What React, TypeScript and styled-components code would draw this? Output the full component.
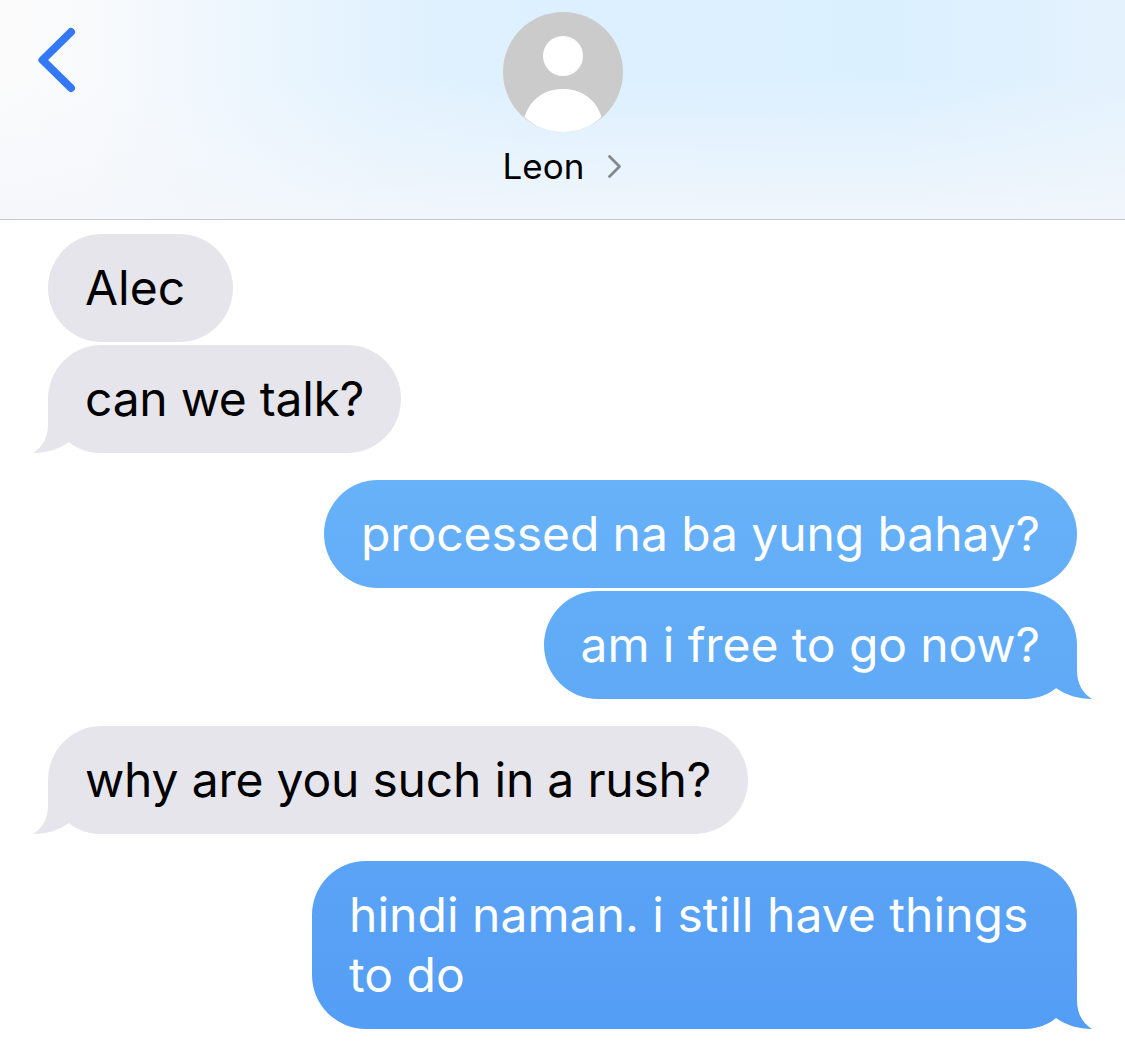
import { createGlobalStyle } from 'styled-components';
import styled from 'styled-components';

const GlobalStyle = createGlobalStyle`
  html, body {
    margin: 0;
    padding: 0;
    background: #fff;
  }
  body {
    font-family: Inter, "Liberation Sans", sans-serif;
  }
`;

function App() {
  return (
    <>
      <GlobalStyle />
      <Page>
        <Header>
          <BackButton>
            <svg width="42" height="68" viewBox="0 0 42 68" fill="none">
              <path d="M35 6 L6.5 34 L35 62" stroke="#3478f6" strokeWidth="8" strokeLinecap="round" strokeLinejoin="round" />
            </svg>
          </BackButton>
          <Contact>
            <Avatar>
              <svg width="120" height="120" viewBox="0 0 120 120">
                <circle cx="60" cy="60" r="60" fill="#cbcbcb" />
                <circle cx="60" cy="44" r="20" fill="#fff" />
                <path d="M21.5 105 C27 87 42 77 60 77 C78 77 93 87 98.5 105 C88 115 75 120 60 120 C45 120 32 115 21.5 105 Z" fill="#fff" />
              </svg>
            </Avatar>
            <NameRow>
              <Name>Leon</Name>
              <svg width="15" height="25" viewBox="0 0 15 25" fill="none">
                <path d="M2.5 2.5 L12.5 12.5 L2.5 22.5" stroke="#85878e" strokeWidth="2.8" strokeLinecap="round" strokeLinejoin="round" />
              </svg>
            </NameRow>
          </Contact>
        </Header>
        <Thread>
          <Group>
            <Bubble>Alec</Bubble>
            <Bubble $tail $tracking={-0.25}>can we talk?</Bubble>
          </Group>
          <Group>
            <Bubble $mine $tracking={-0.08}>processed na ba yung bahay?</Bubble>
            <Bubble $mine $tail $tracking={-0.1}>am i free to go now?</Bubble>
          </Group>
          <Group>
            <Bubble $tail $tracking={-0.2}>why are you such in a rush?</Bubble>
          </Group>
          <Group>
            <Bubble $mine $tail $wide $tracking={0.03}>hindi naman. i still have things to do</Bubble>
          </Group>
        </Thread>
      </Page>
    </>
  );
}

const Page = styled.div`
  width: 1125px;
  height: 1050px;
  overflow: hidden;
  background: #fff;
`;

const Header = styled.header`
  position: relative;
  height: 207px;
  border-bottom: 1px solid #c8c8ca;
  display: flex;
  justify-content: center;
  padding-top: 12px;
  background:
    linear-gradient(180deg, rgba(244, 247, 251, 0) 35%, rgba(244, 247, 251, 0.85) 100%),
    linear-gradient(90deg, #fbfbfb 0%, #f9fafc 8%, #eef7fe 20%, #e2f2fe 34%, #dcf0ff 50%, #dbf0ff 80%, #e4f2fd 100%);
`;

const BackButton = styled.div`
  position: absolute;
  left: 36px;
  top: 26px;
  line-height: 0;
`;

const Contact = styled.div`
  display: flex;
  flex-direction: column;
  align-items: center;
`;

const Avatar = styled.div`
  width: 120px;
  height: 120px;
  line-height: 0;
`;

const NameRow = styled.div`
  display: flex;
  align-items: center;
  gap: 23px;
  margin-top: 13px;
  height: 42px;
`;

const Name = styled.span`
  font-size: 35px;
  color: #000;
`;

const Thread = styled.main`
  display: flex;
  flex-direction: column;
  gap: 27px;
  padding: 14px 48px 0;
`;

const Group = styled.div`
  display: flex;
  flex-direction: column;
  gap: 3px;
`;

const Bubble = styled.div<{ $mine?: boolean; $tail?: boolean; $wide?: boolean; $tracking?: number }>`
  position: relative;
  isolation: isolate;
  box-sizing: border-box;
  width: fit-content;
  min-width: 185px;
  max-width: ${(p) => (p.$wide ? '765px' : 'none')};
  padding: 24px 37px;
  border-radius: 54px;
  font-size: 48px;
  letter-spacing: ${(p) => p.$tracking ?? 0}px;
  line-height: 60px;
  align-self: ${(p) => (p.$mine ? 'flex-end' : 'flex-start')};
  color: ${(p) => (p.$mine ? '#fff' : '#000')};
  background: ${(p) => (p.$mine ? 'linear-gradient(180deg, #67b2f8 0, #67b2f8 470px, #549df5 1040px) fixed' : '#e5e5eb')};

  ${(p) =>
    p.$tail &&
    `
    &::after {
      content: '';
      position: absolute;
      z-index: -1;
      bottom: 0;
      ${p.$mine ? 'right: -15px;' : 'left: -15px; transform: scaleX(-1);'}
      width: 69px;
      height: 54px;
      background: inherit;
      clip-path: path('M54 0 L54 25 C54 38 59 48 69 54 C55 54 43 50 33 43 C25 50 13 54 0 54 L0 0 Z');
    }
  `}
`;

export default App;
